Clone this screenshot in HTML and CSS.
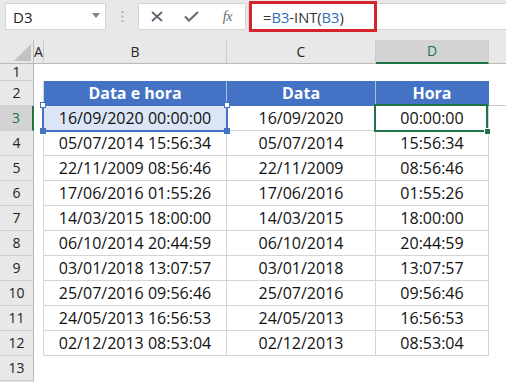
FILE: index.html
```html
<!DOCTYPE html>
<html lang="pt">
<head>
<meta charset="utf-8">
<title>Excel</title>
<link rel="stylesheet" href="styles.css">
</head>
<body>
<div class="toolbar">
  <div class="namebox"><span class="nb-text">D3</span><svg class="caret" width="8" height="5" viewBox="0 0 8 5"><path d="M0 0H8L4 5Z" fill="#808080"/></svg></div>
  <div class="grip"><svg width="3" height="11" viewBox="0 0 3 11"><rect x="0.5" y="0" width="2" height="2" fill="#b3b3b3"/><rect x="0.5" y="4.5" width="2" height="2" fill="#b3b3b3"/><rect x="0.5" y="9" width="2" height="2" fill="#b3b3b3"/></svg></div>
  <div class="btnbox">
    <span class="btn"><svg width="12" height="11" viewBox="0 0 12 11"><path d="M1 1L11 10M11 1L1 10" stroke="#5c6370" stroke-width="1.7" fill="none"/></svg></span>
    <span class="btn"><svg width="15" height="11" viewBox="0 0 15 11"><path d="M1 5.5L5 9.5L14 1" stroke="#6e6e6e" stroke-width="2.3" fill="none"/></svg></span>
    <span class="btn fx">fx</span>
  </div>
  <div class="formula">
    <span class="ftext">=<span class="ref">B3</span>-INT(<span class="ref">B3</span>)</span>
    <div class="fbox"></div>
  </div>
</div>
<div class="sheet">
  <div class="row hdr">
    <div class="rh corner"><svg width="18" height="18" viewBox="0 0 18 18"><path d="M17 0V17H0Z" fill="#c2c2c2"/></svg></div>
    <div class="c ca">A</div><div class="c cb">B</div><div class="c cc">C</div><div class="c cd sel">D</div><div class="c cr"></div>
  </div>
  <div class="row r1">
    <div class="rh">1</div><div class="c ca"></div><div class="c cb"></div><div class="c cc"></div><div class="c cd"></div><div class="c cr"></div>
  </div>
  <div class="row th">
    <div class="rh">2</div><div class="c ca"></div><div class="c cb">Data e hora</div><div class="c cc">Data</div><div class="c cd">Hora</div><div class="c cr"></div>
  </div>
  <div class="row t">
    <div class="rh sel">3</div><div class="c ca"></div>
    <div class="c cb refcell">16/09/2020 00:00:00<span class="refbox"><i class="h tl"></i><i class="h tr"></i><i class="h bl"></i><i class="h br"></i></span></div>
    <div class="c cc">16/09/2020</div>
    <div class="c cd active">00:00:00<span class="actbox"><i class="fillh"></i></span></div>
    <div class="c cr"></div>
  </div>
  <div class="row t"><div class="rh">4</div><div class="c ca"></div><div class="c cb">05/07/2014 15:56:34</div><div class="c cc">05/07/2014</div><div class="c cd">15:56:34</div><div class="c cr"></div></div>
  <div class="row t"><div class="rh">5</div><div class="c ca"></div><div class="c cb">22/11/2009 08:56:46</div><div class="c cc">22/11/2009</div><div class="c cd">08:56:46</div><div class="c cr"></div></div>
  <div class="row t"><div class="rh">6</div><div class="c ca"></div><div class="c cb">17/06/2016 01:55:26</div><div class="c cc">17/06/2016</div><div class="c cd">01:55:26</div><div class="c cr"></div></div>
  <div class="row t"><div class="rh">7</div><div class="c ca"></div><div class="c cb">14/03/2015 18:00:00</div><div class="c cc">14/03/2015</div><div class="c cd">18:00:00</div><div class="c cr"></div></div>
  <div class="row t"><div class="rh">8</div><div class="c ca"></div><div class="c cb">06/10/2014 20:44:59</div><div class="c cc">06/10/2014</div><div class="c cd">20:44:59</div><div class="c cr"></div></div>
  <div class="row t"><div class="rh">9</div><div class="c ca"></div><div class="c cb">03/01/2018 13:07:57</div><div class="c cc">03/01/2018</div><div class="c cd">13:07:57</div><div class="c cr"></div></div>
  <div class="row t"><div class="rh">10</div><div class="c ca"></div><div class="c cb">25/07/2016 09:56:46</div><div class="c cc">25/07/2016</div><div class="c cd">09:56:46</div><div class="c cr"></div></div>
  <div class="row t"><div class="rh">11</div><div class="c ca"></div><div class="c cb">24/05/2013 16:56:53</div><div class="c cc">24/05/2013</div><div class="c cd">16:56:53</div><div class="c cr"></div></div>
  <div class="row t"><div class="rh">12</div><div class="c ca"></div><div class="c cb">02/12/2013 08:53:04</div><div class="c cc">02/12/2013</div><div class="c cd">08:53:04</div><div class="c cr"></div></div>
  <div class="row"><div class="rh">13</div><div class="c ca"></div><div class="c cb"></div><div class="c cc"></div><div class="c cd"></div><div class="c cr"></div></div>
  <div class="row tail"><div class="rh"></div><div class="c cr"></div></div>
</div>
</body>
</html>
```

FILE: styles.css
```css
html, body {
  margin: 0;
  padding: 0;
}
body {
  width: 506px;
  height: 382px;
  overflow: hidden;
  background: #ffffff;
  font-family: "Open Sans", "Noto Sans", sans-serif;
  color: #000;
}

/* ---------- formula bar ---------- */
.toolbar {
  display: flex;
  align-items: flex-start;
  height: 40px;
  padding-top: 3px;
  box-sizing: border-box;
  background: #e8e8e8;
}
.namebox {
  margin-left: 5px;
  width: 101px;
  height: 27px;
  box-sizing: border-box;
  background: #fff;
  border: 1px solid #d6d6d6;
  display: flex;
  align-items: center;
  justify-content: space-between;
  padding: 0 5px 0 7px;
  font-size: 15px;
  color: #222;
}
.caret { margin-top: -2px; }
.grip {
  width: 32px;
  height: 27px;
  display: flex;
  align-items: center;
  justify-content: center;
}
.btnbox {
  width: 108px;
  height: 27px;
  box-sizing: border-box;
  background: #fff;
  border: 1px solid #d6d6d6;
  display: flex;
  align-items: center;
}
.btn {
  width: 36px;
  height: 25px;
  display: flex;
  align-items: center;
  justify-content: center;
}
.fx {
  font-family: "Liberation Serif", serif;
  font-style: italic;
  font-size: 14px;
  color: #666;
  letter-spacing: -0.5px;
}
.formula {
  position: relative;
  margin-left: 2px;
  flex: 1;
  height: 27px;
  box-sizing: border-box;
  background: #fff;
  border: 1px solid #d6d6d6;
  border-right: none;
  display: flex;
  align-items: center;
  padding-left: 14px;
}
.ftext {
  font-size: 14.7px;
  color: #333;
  white-space: nowrap;
}
.ref { color: #2f6eba; }
.fbox {
  position: absolute;
  left: 0;
  top: -3px;
  width: 128px;
  height: 31px;
  box-sizing: border-box;
  border: 3px solid #d7232b;
}

/* ---------- sheet ---------- */
.row {
  display: flex;
  height: 25px;
}
.row.hdr { height: 24px; }
.row.r1 { height: 17px; }
.row.tail { height: 2px; }

.rh {
  width: 34px;
  flex: none;
  box-sizing: border-box;
  background: #e8e8e8;
  border-right: 1px solid #b9b9b9;
  border-bottom: 1px solid #cdcdcd;
  text-align: center;
  font-size: 14px;
  line-height: 24px;
  color: #222;
}
.r1 .rh { line-height: 16px; }
.tail .rh { border-bottom: none; }
.rh.sel {
  background: #d3d3d3;
  color: #217346;
  border-right: 2px solid #217346;
}
.rh.corner {
  border-bottom-color: #b9b9b9;
  display: flex;
  align-items: flex-end;
  justify-content: flex-end;
  padding: 0 1px 1px 0;
}
.rh.corner svg { display: block; }

.c {
  box-sizing: border-box;
  flex: none;
  border-bottom: 1px solid transparent;
  border-right: 1px solid transparent;
  text-align: center;
  white-space: nowrap;
  overflow: visible;
}
.ca { width: 10px; overflow: hidden; }
.cb { width: 183px; }
.cc { width: 149px; }
.cd { width: 113px; }
.cr { flex: 1; border-right: none; }

/* column header */
.hdr .c {
  background: #e8e8e8;
  border-bottom-color: #b9b9b9;
  border-right-color: #cbcbcb;
  font-size: 14px;
  line-height: 23px;
  color: #262626;
}
.hdr .ca { text-align: left; }
.hdr .cr { border-right: none; }
.hdr .c.sel {
  background: #d3d3d3;
  color: #217346;
  border-bottom: 2px solid #217346;
  line-height: 22px;
}

/* table header */
.th .ca { border-right-color: #d4d4d4; }
.th .cb, .th .cc, .th .cd {
  background: #4472c4;
  color: #fff;
  font-weight: 700;
  font-size: 16px;
  line-height: 24px;
  border-bottom-color: #4472c4;
  border-right-color: #a8bde4;
}
.th .cd { border-right-color: #4472c4; }
.th .cr { border-bottom-color: #c8c8c8; }

/* table body */
.t .ca { border-right-color: #d4d4d4; }
.t .cb, .t .cc, .t .cd {
  border-right-color: #d4d4d4;
  border-bottom-color: #d4d4d4;
  font-size: 16px;
  line-height: 24px;
  color: #111;
}

/* B3 reference highlight */
.refcell {
  position: relative;
  background: #dbe5f5;
}
.refbox {
  position: absolute;
  inset: -2px;
  border: 2px solid #4472c4;
}
.h {
  position: absolute;
  width: 6px;
  height: 6px;
  box-sizing: border-box;
  border: 1px solid #4472c4;
  background: #fff;
}
.h.tl { left: -4px; top: -4px; }
.h.tr { right: -4px; top: -4px; }
.h.bl { left: -4px; bottom: -4px; background: #4472c4; }
.h.br { right: -4px; bottom: -4px; background: #4472c4; }

/* D3 active cell */
.active { position: relative; }
.actbox {
  position: absolute;
  left: -2px;
  top: -2px;
  right: 0;
  bottom: -2px;
  border: 2px solid #217346;
}
.fillh {
  position: absolute;
  right: -5px;
  bottom: -5px;
  width: 7px;
  height: 7px;
  box-sizing: border-box;
  background: #217346;
  border: 1px solid #fff;
}
```
